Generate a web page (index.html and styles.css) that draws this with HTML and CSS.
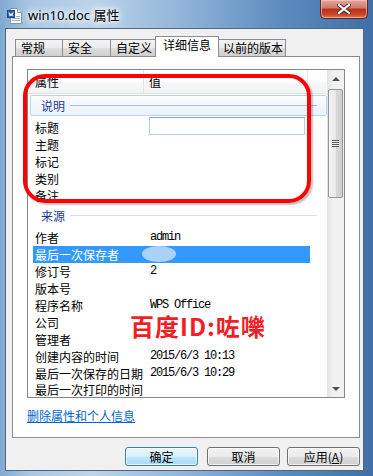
FILE: index.html
```html
<!DOCTYPE html>
<html lang="zh-CN">
<head>
    <meta charset="UTF-8">
    <title>win10.doc 属性</title>
    <link rel="stylesheet" href="styles.css">
</head>
<body>
<div id="window">
    <div id="titlebar">
        <svg class="app-icon" width="16" height="16" viewBox="0 0 16 16">
            <path d="M3.5 0.5h7l4 4v11h-11z" fill="#fff" stroke="#8a9099"/>
            <path d="M10.5 0.5v4h4" fill="#e8ecf0" stroke="#8a9099"/>
            <rect x="0.5" y="2.5" width="7" height="7" fill="#2b63b8" stroke="#1d4a8c"/>
            <path d="M2 4.5l1 3.5 1-2.5 1 2.5 1-3.5" fill="none" stroke="#fff" stroke-width="0.9"/>
            <path d="M9 8.5h4M5 10.5h8M5 12.5h8" stroke="#9fb4cc"/>
        </svg>
        <span class="title">win10.doc 属性</span>
        <div class="close">
            <svg width="14" height="10" viewBox="0 0 14 10">
                <path d="M2 1l10 8M12 1l-10 8" stroke="#3c2a2a" stroke-width="4" stroke-linecap="square"/>
                <path d="M2 1l10 8M12 1l-10 8" stroke="#fff" stroke-width="2.2" stroke-linecap="square"/>
            </svg>
        </div>
    </div>
    <div id="client">
        <div class="tabs">
            <div class="tab w1">常规</div>
            <div class="tab w2">安全</div>
            <div class="tab w3">自定义</div>
            <div class="tab w4 active">详细信息</div>
            <div class="tab w5">以前的版本</div>
        </div>
        <div class="panel">
            <div class="listview">
                <div class="list-body">
                    <div class="header">
                        <span class="col-name">属性</span>
                        <span class="col-value">值</span>
                        <span class="col-rest"></span>
                    </div>
                    <div class="group focused">
                        <div class="group-box"><span class="group-label">说明</span><span class="group-line"></span></div>
                    </div>
                    <div class="row"><span class="name">标题</span><span class="value"><span class="edit"></span></span></div>
                    <div class="row"><span class="name">主题</span><span class="value"></span></div>
                    <div class="row"><span class="name">标记</span><span class="value"></span></div>
                    <div class="row"><span class="name">类别</span><span class="value"></span></div>
                    <div class="row"><span class="name">备注</span><span class="value"></span></div>
                    <div class="group">
                        <div class="group-box"><span class="group-label">来源</span><span class="group-line"></span></div>
                    </div>
                    <div class="row"><span class="name">作者</span><span class="value mono">admin</span></div>
                    <div class="row selected"><span class="name">最后一次保存者</span><span class="value"><span class="blur"></span></span></div>
                    <div class="row"><span class="name">修订号</span><span class="value mono">2</span></div>
                    <div class="row"><span class="name">版本号</span><span class="value"></span></div>
                    <div class="row"><span class="name">程序名称</span><span class="value mono">WPS Office</span></div>
                    <div class="row"><span class="name">公司</span><span class="value"></span></div>
                    <div class="row"><span class="name">管理者</span><span class="value"></span></div>
                    <div class="row"><span class="name">创建内容的时间</span><span class="value mono">2015/6/3 10:13</span></div>
                    <div class="row"><span class="name">最后一次保存的日期</span><span class="value mono">2015/6/3 10:29</span></div>
                    <div class="row last"><span class="name">最后一次打印的时间</span><span class="value"></span></div>
                </div>
                <div class="scrollbar">
                    <div class="sb-btn"><span class="arrow-up"></span></div>
                    <div class="sb-thumb"><span class="grip"></span></div>
                    <div class="sb-track"></div>
                    <div class="sb-btn"><span class="arrow-down"></span></div>
                </div>
                <div class="mark-box"></div>
                <div class="mark-text">百度ID:咗嚛</div>
            </div>
            <a class="remove-link" href="#">删除属性和个人信息</a>
        </div>
        <div class="buttons">
            <div class="btn default">确定</div>
            <div class="btn cancel">取消</div>
            <div class="btn">应用(<u>A</u>)</div>
        </div>
    </div>
</div>
</body>
</html>
```
FILE: styles.css
```css
* {
    box-sizing: border-box;
}
body {
    margin: 0;
    width: 373px;
    height: 476px;
    overflow: hidden;
    font-family: "Noto Sans CJK SC", sans-serif;
    font-size: 12px;
    color: #000;
    background: linear-gradient(to right, #7fa9d3 0%, #a9c7e4 8%, #bcd4ea 25%, #8fb3d8 50%, #5d8cbf 75%, #3f6fa6 100%);
}
#window {
    width: 373px;
    height: 476px;
}
#titlebar {
    height: 28px;
    display: flex;
    align-items: flex-start;
    padding-left: 7px;
}
#titlebar .app-icon {
    margin-top: 8px;
}
#titlebar .title {
    margin-left: 5px;
    margin-top: 6px;
    font-family: "Noto Sans", "Noto Sans CJK SC", sans-serif;
    font-size: 13px;
    line-height: 18px;
    color: #000;
    text-shadow: 0 0 5px #fff, 0 0 8px #fff, 0 0 10px #fff;
}
#titlebar .close {
    margin-left: auto;
    margin-right: 5px;
    width: 48px;
    height: 19px;
    border: 1px solid #5a2a22;
    border-top: none;
    border-radius: 0 0 5px 5px;
    background: linear-gradient(#e3a89b 0%, #d2776a 45%, #b8301a 50%, #c8452a 80%, #e07a4c 100%);
    box-shadow: inset 0 0 0 1px rgba(255, 220, 210, 0.5);
    display: flex;
    align-items: center;
    justify-content: center;
}
#client {
    margin-left: 5px;
    width: 359px;
    height: 443px;
    border: 1px solid #52657d;
    background: #f0f0f0;
    padding-top: 7px;
    display: flex;
    flex-direction: column;
}
.tabs {
    height: 20px;
    display: flex;
    align-items: flex-end;
    padding-left: 9px;
}
.tab {
    height: 17px;
    border: 1px solid #898c95;
    border-bottom: none;
    margin-right: -1px;
    padding-left: 5px;
    line-height: 15px;
    background: linear-gradient(#f3f3f3, #ebebeb 50%, #dddddd 51%, #cfcfcf);
    white-space: nowrap;
}
.tab.w1 { width: 48px; }
.tab.w2 { width: 49px; }
.tab.w3 { width: 47px; }
.tab.w4 { width: 64px; }
.tab.w5 { width: 69px; }
.tab.active {
    height: 21px;
    margin-bottom: -1px;
    margin-left: -1px;
    margin-right: -2px;
    padding-left: 7px;
    line-height: 16px;
    background: #fff;
    position: relative;
    z-index: 1;
}
.panel {
    margin: 0 3px 0 6px;
    height: 382px;
    border: 1px solid #898c95;
    background: #fff;
    padding: 12px 0 0 14px;
}
.listview {
    position: relative;
    width: 318px;
    height: 329px;
    border: 1px solid #828790;
    display: flex;
}
.list-body {
    flex: 1;
    overflow: hidden;
}
.header {
    height: 24px;
    display: flex;
    line-height: 24px;
    background: linear-gradient(#ffffff, #ffffff 50%, #f7f8fa 51%, #f1f2f4);
    border-bottom: 1px solid #e2e3e5;
}
.header .col-name {
    width: 116px;
    padding-left: 7px;
    border-right: 1px solid #e3e4e6;
}
.header .col-value {
    width: 164px;
    padding-left: 5px;
    border-right: 1px solid #e3e4e6;
}
.group {
    height: 25px;
    padding: 1px 0 3px 2px;
}
.group-box {
    height: 21px;
    display: flex;
    align-items: center;
    padding-left: 10px;
    border: 1px solid transparent;
    border-radius: 2px;
}
.group.focused .group-box {
    border-color: #b9d4f2;
    background: linear-gradient(#fbfcfe, #eaf2fc);
}
.group-label {
    color: #1e3a9c;
    line-height: 17px;
}
.group-line {
    flex: 1;
    height: 1px;
    margin: 0 9px 0 5px;
    background: #d5dfee;
}
.group.focused .group-line {
    background: #a9bfdc;
}
.row {
    height: 17px;
    width: 277px;
    margin-left: 5px;
    padding-left: 2px;
    display: flex;
    line-height: 17px;
    white-space: nowrap;
}
.row.last {
    height: 15px;
    line-height: 15px;
}
.row .name {
    width: 115px;
}
.row .value {
    flex: 1;
    display: flex;
}
.row.selected {
    background: #3399ff;
    color: #fff;
}
.mono {
    font-family: "Liberation Mono", monospace;
    font-size: 12px;
    letter-spacing: -1.2px;
}
.edit {
    width: 156px;
    height: 18px;
    margin: -2px 0 0 -1px;
    border: 1px solid #b5cfe7;
    border-top-color: #7fa8d4;
    background: #fff;
}
.blur {
    width: 34px;
    height: 16px;
    margin-left: -8px;
    border-radius: 50%;
    background: #a9d2f8;
    filter: blur(0.6px);
}
.scrollbar {
    width: 17px;
    display: flex;
    flex-direction: column;
    background: linear-gradient(to right, #e4e4e4, #f1f1f1 40%, #f1f1f1);
}
.sb-btn {
    height: 17px;
    display: flex;
    align-items: center;
    justify-content: center;
}
.arrow-up {
    width: 0;
    height: 0;
    border-left: 4px solid transparent;
    border-right: 4px solid transparent;
    border-bottom: 4px solid #4f4f4f;
}
.arrow-down {
    width: 0;
    height: 0;
    border-left: 4px solid transparent;
    border-right: 4px solid transparent;
    border-top: 4px solid #4f4f4f;
}
.sb-thumb {
    height: 109px;
    margin: 2px 1px 0 1px;
    border: 1px solid #959595;
    border-radius: 2px;
    background: linear-gradient(to right, #f5f5f5, #e9e9e9 50%, #d9d9d9 51%, #cfcfcf);
    display: flex;
    align-items: center;
    justify-content: center;
}
.grip {
    width: 7px;
    height: 7px;
    background: repeating-linear-gradient(#555 0 1px, #f0f0f0 1px 2px);
}
.sb-track {
    flex: 1;
}
.mark-box {
    position: absolute;
    left: -5px;
    top: 4px;
    width: 288px;
    height: 129px;
    border: 4px solid #ff0000;
    border-radius: 22px;
    box-shadow: 2px 2px 2px rgba(0, 0, 0, 0.25);
}
.mark-text {
    position: absolute;
    left: 102px;
    top: 244px;
    font-size: 24px;
    line-height: 24px;
    font-weight: bold;
    color: #f01e26;
    letter-spacing: 1px;
    white-space: nowrap;
}
.remove-link {
    display: inline-block;
    margin-top: 10px;
    line-height: 15px;
    color: #0066cc;
}
.buttons {
    margin-top: 9px;
    height: 19px;
    display: flex;
    justify-content: flex-end;
    padding-right: 3px;
}
.btn {
    width: 73px;
    height: 19px;
    margin-left: 7px;
    border: 1px solid #707070;
    border-radius: 3px;
    background: linear-gradient(#f2f2f2, #ebebeb 50%, #dddddd 51%, #cfcfcf);
    text-align: center;
    line-height: 17px;
    box-shadow: inset 0 0 0 1px rgba(255, 255, 255, 0.7);
}
.btn.default {
    margin-right: 2px;
    border-color: #3c7fb1;
    background: linear-gradient(#eaf6fd, #d9f0fc 50%, #bee6fd 51%, #a7d9f5);
}
```
